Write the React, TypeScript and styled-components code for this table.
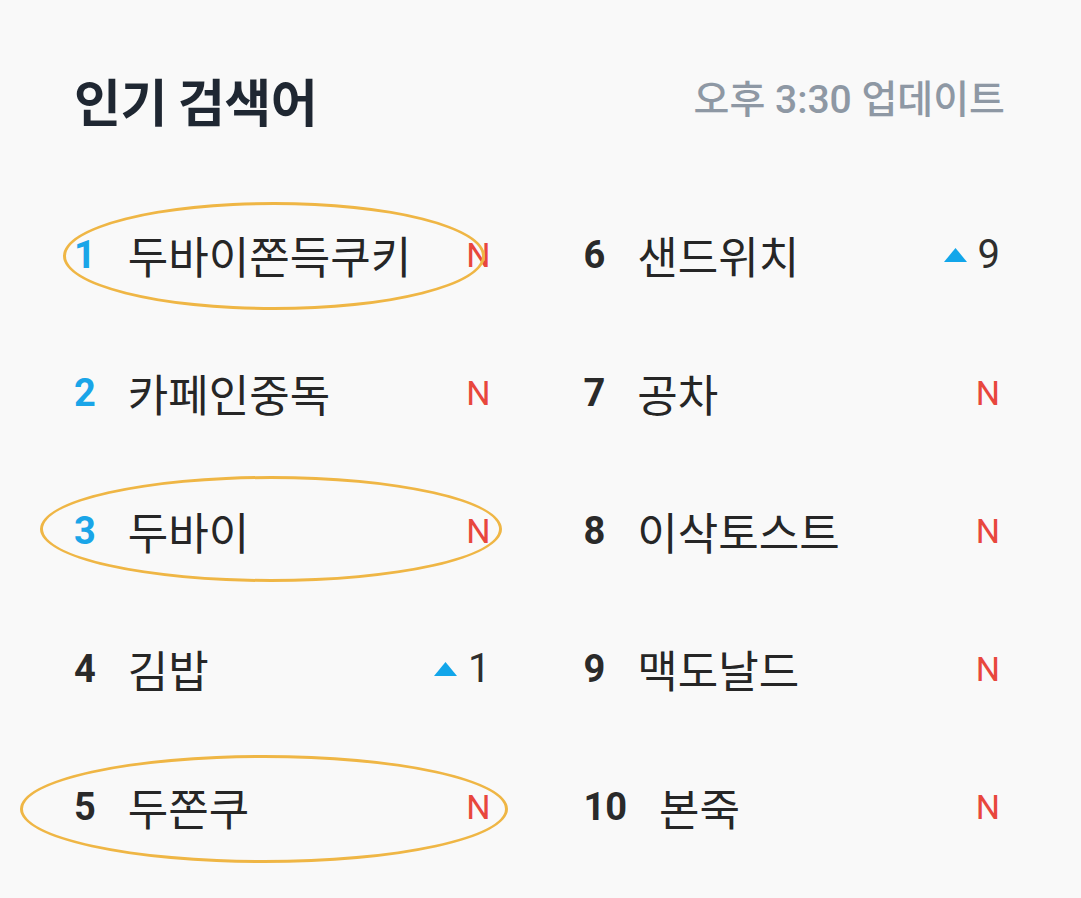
import * as React from 'react';
import styled, { createGlobalStyle } from 'styled-components';

const GlobalStyle = createGlobalStyle`
  html, body {
    margin: 0;
    padding: 0;
    background: #f9f9f9;
  }
  body {
    font-family: Roboto, "Noto Sans CJK KR", sans-serif;
  }
`;

interface Keyword {
  rank: number;
  word: string;
  change: 'new' | number;
  ring?: { left: number; top: number; width: number; height: number };
}

const KEYWORDS: Keyword[] = [
  { rank: 1, word: '두바이쫀득쿠키', change: 'new', ring: { left: -11, top: 16, width: 422, height: 108 } },
  { rank: 2, word: '카페인중독', change: 'new' },
  { rank: 3, word: '두바이', change: 'new', ring: { left: -34, top: 14, width: 462, height: 106 } },
  { rank: 4, word: '김밥', change: 1 },
  { rank: 5, word: '두쫀쿠', change: 'new', ring: { left: -54, top: 17, width: 488, height: 108 } },
  { rank: 6, word: '샌드위치', change: 9 },
  { rank: 7, word: '공차', change: 'new' },
  { rank: 8, word: '이삭토스트', change: 'new' },
  { rank: 9, word: '맥도날드', change: 'new' },
  { rank: 10, word: '본죽', change: 'new' },
];

const Page = styled.div`
  width: 1081px;
  height: 898px;
  box-sizing: border-box;
  padding: 0 81px 0 74px;
  background: #f9f9f9;
  overflow: hidden;
`;

const Header = styled.div`
  display: flex;
  align-items: center;
  justify-content: space-between;
  height: 186px;
  box-sizing: border-box;
  padding: 14px 0 0 0;
  margin-right: -5px;
`;

const Title = styled.h1`
  margin: 0;
  font-family: "Noto Sans CJK KR", sans-serif;
  font-size: 51px;
  font-weight: 700;
  color: #1f2732;
  line-height: 1;
  letter-spacing: -0.5px;
`;

const Updated = styled.div`
  font-family: Roboto, "Noto Sans CJK KR", sans-serif;
  font-size: 39px;
  font-weight: 500;
  color: #8e98a4;
  line-height: 1;
`;

const Grid = styled.ol`
  list-style: none;
  margin: 0;
  padding: 0;
  display: grid;
  grid-template-columns: 1fr 1fr;
  grid-template-rows: repeat(5, 138px);
  grid-auto-flow: column;
  column-gap: 93px;
`;

const Item = styled.li`
  position: relative;
  display: flex;
  align-items: center;
`;

const Rank = styled.span<{ $top: boolean }>`
  font-family: Roboto, sans-serif;
  font-size: 38px;
  font-weight: 700;
  color: ${p => (p.$top ? '#1aa5e8' : '#2a2a2a')};
  margin-right: 32px;
  line-height: 1;
`;

const Word = styled.span`
  flex: 1;
  font-family: "Noto Sans CJK KR", sans-serif;
  font-size: 44px;
  color: #262626;
  line-height: 1;
`;

const NewBadge = styled.span`
  font-family: Roboto, sans-serif;
  font-size: 34px;
  color: #e8473d;
  line-height: 1;
`;

const Rise = styled.span`
  display: flex;
  align-items: center;
  gap: 11px;
  font-family: Roboto, sans-serif;
  font-size: 40px;
  color: #2e2e2e;
  line-height: 1;
`;

const Ring = styled.span`
  position: absolute;
  box-sizing: border-box;
  border: 3px solid #efb645;
  border-radius: 50%;
  pointer-events: none;
`;

const Up = () => (
  <svg width="23" height="14" viewBox="0 0 23 14">
    <polygon points="11.5,0 23,14 0,14" fill="#12a6ea" />
  </svg>
);

const App = () => (
  <Page>
    <GlobalStyle />
    <Header>
      <Title>인기 검색어</Title>
      <Updated>오후 3:30 업데이트</Updated>
    </Header>
    <Grid>
      {KEYWORDS.map(k => (
        <Item key={k.rank}>
          <Rank $top={k.rank <= 3}>{k.rank}</Rank>
          <Word>{k.word}</Word>
          {k.change === 'new' ? (
            <NewBadge>N</NewBadge>
          ) : (
            <Rise>
              <Up />
              {k.change}
            </Rise>
          )}
          {k.ring && <Ring style={k.ring} />}
        </Item>
      ))}
    </Grid>
  </Page>
);

export default App;
